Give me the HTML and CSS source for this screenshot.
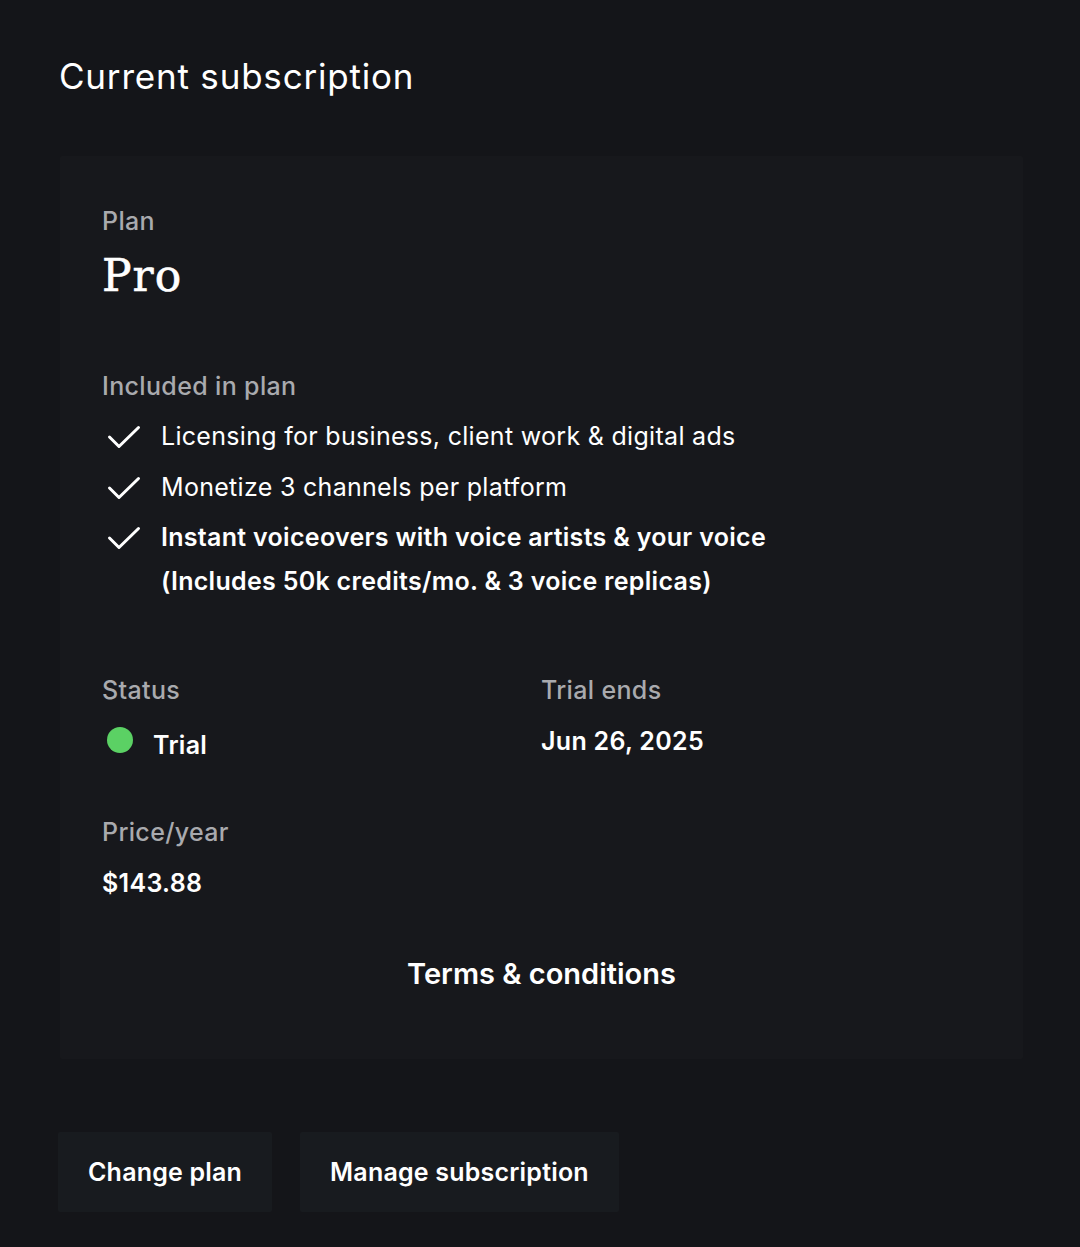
FILE: index.html
```html
<!DOCTYPE html>
<html lang="en">
<head>
  <meta charset="UTF-8" />
  <title>Current subscription</title>
  <meta name="viewport" content="width=device-width, initial-scale=1.0" />
  <link rel="stylesheet" href="styles.css">
</head>
<body>
  <main class="page">
    <h1 class="page-title">Current subscription</h1>

    <section class="plan-card">
      <div class="label">Plan</div>
      <div class="plan-name">Pro</div>

      <div class="label included">Included in plan</div>
      <ul class="features">
        <li>
          <svg class="check" viewBox="0 0 34 24" width="34" height="24"><path d="M2.5 12 L12 21.5 L31.5 2.5" fill="none" stroke="#fff" stroke-width="3" stroke-linecap="round" stroke-linejoin="round"/></svg>
          <span>Licensing for business, client work &amp; digital ads</span>
        </li>
        <li>
          <svg class="check" viewBox="0 0 34 24" width="34" height="24"><path d="M2.5 12 L12 21.5 L31.5 2.5" fill="none" stroke="#fff" stroke-width="3" stroke-linecap="round" stroke-linejoin="round"/></svg>
          <span>Monetize 3 channels per platform</span>
        </li>
        <li class="strong">
          <svg class="check" viewBox="0 0 34 24" width="34" height="24"><path d="M2.5 12 L12 21.5 L31.5 2.5" fill="none" stroke="#fff" stroke-width="3" stroke-linecap="round" stroke-linejoin="round"/></svg>
          <span>Instant voiceovers with voice artists &amp; your voice<br>(Includes 50k credits/mo. &amp; 3 voice replicas)</span>
        </li>
      </ul>

      <div class="details">
        <div class="detail">
          <div class="label">Status</div>
          <div class="status"><span class="dot"></span><span class="value">Trial</span></div>
        </div>
        <div class="detail">
          <div class="label">Trial ends</div>
          <div class="value date">Jun 26, 2025</div>
        </div>
        <div class="detail">
          <div class="label">Price/year</div>
          <div class="value date">$143.88</div>
        </div>
      </div>

      <div class="terms">Terms &amp; conditions</div>
    </section>

    <div class="actions">
      <button class="btn">Change plan</button>
      <button class="btn">Manage subscription</button>
    </div>
  </main>
</body>
</html>
```

FILE: styles.css
```css
body {
  margin: 0;
  background-color: #141519;
  color: #fff;
  font-family: 'Inter', 'Noto Sans', sans-serif;
}

.page {
  padding: 52px 57px 34px 59px;
}

.page-title {
  margin: 0;
  font-size: 35px;
  font-weight: 400;
  line-height: 48px;
  letter-spacing: 0.8px;
}

.plan-card {
  margin-top: 56px;
  margin-left: 1px;
  background-color: #17181c;
  border-radius: 2px;
  padding: 50px 42px 67px 42px;
}

.label {
  color: #a9aaae;
  font-size: 25px;
  font-weight: 500;
  line-height: 30px;
  letter-spacing: 0.35px;
}

.plan-name {
  font-family: 'DejaVu Serif', 'Liberation Serif', serif;
  font-size: 44px;
  font-weight: 400;
  line-height: 52px;
  letter-spacing: 1px;
  -webkit-text-stroke: 0.6px #fff;
  margin-top: 14px;
}

.included {
  margin-top: 69px;
}

.features {
  list-style: none;
  padding: 0;
  margin: 13px 0 0 0;
  display: flex;
  flex-direction: column;
  gap: 6.5px;
}

.features li {
  display: flex;
  align-items: flex-start;
  gap: 20px;
  font-size: 25px;
  line-height: 44px;
  letter-spacing: 0.3px;
}

.features li.strong {
  font-weight: 600;
}

.check {
  flex-shrink: 0;
  margin-top: 11px;
  margin-left: 5px;
}

.details {
  display: grid;
  grid-template-columns: 439px 1fr;
  row-gap: 56px;
  margin-top: 72px;
}

.status {
  display: flex;
  align-items: flex-start;
  gap: 20px;
  margin-top: 22px;
}

.dot {
  width: 26px;
  height: 26px;
  border-radius: 50%;
  background-color: #5bd164;
  margin-left: 5px;
}

.value {
  font-size: 25px;
  font-weight: 600;
  line-height: 32px;
  letter-spacing: 0.3px;
}

.status .value {
  margin-top: 2px;
}

.date {
  margin-top: 20px;
}

.terms {
  margin-top: 57px;
  text-align: center;
  font-size: 29px;
  font-weight: 600;
  line-height: 36px;
}

.actions {
  display: flex;
  gap: 28px;
  margin-top: 73px;
  margin-left: -1px;
}

.btn {
  background-color: #181b1f;
  color: #fff;
  border: none;
  border-radius: 2px;
  font-family: inherit;
  font-size: 25px;
  font-weight: 600;
  letter-spacing: 0.2px;
  padding: 24px 30px;
  line-height: 32px;
  cursor: pointer;
}
```
